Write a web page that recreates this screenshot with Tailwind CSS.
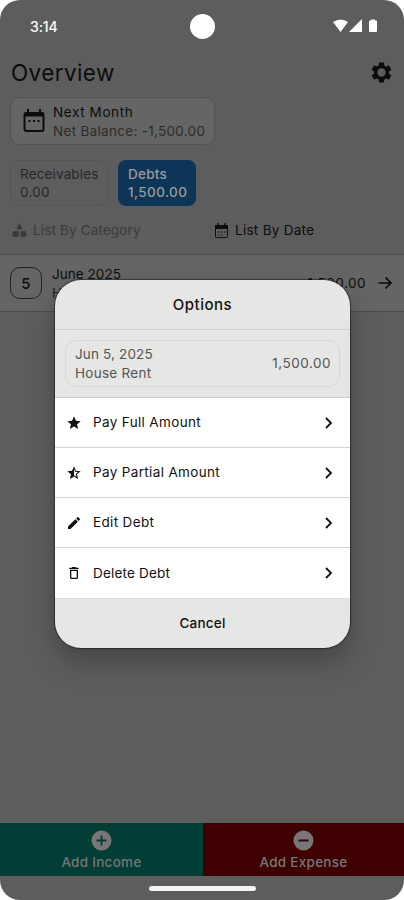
<!DOCTYPE html>
<html lang="en">
<head>
<meta charset="utf-8">
<title>Overview</title>
<script src="https://cdn.jsdelivr.net/npm/@tailwindcss/browser@4"></script>
</head>
<body class="bg-white">
<div class="relative w-[404px] h-[900px] overflow-hidden rounded-[20px] bg-[#5d5d5d] font-['Inter','Noto_Sans',sans-serif] text-[13.5px] tracking-[0.28px] leading-[19px] text-[#0c0c0c] whitespace-nowrap flex flex-col">
  <header class="relative h-[52px] shrink-0 flex items-center justify-between pl-[30px] pr-[26px] text-white">
    <span class="text-[14px] font-medium tracking-[-0.1px]">3:14</span>
    <div class="absolute left-[190px] top-[14px] size-[25px] rounded-full bg-white"></div>
    <svg class="w-[45px] h-[14px]" viewBox="0 0 45 14" fill="currentColor"><path d="M0 3Q7.500-2 15 3L7.500 13z"/><path d="M29 0v13H16z"/><path d="M37 1.500h1V.500h4v1h1q1 0 1 1V12q0 1-1 1h-6q-1 0-1-1V2.500q0-1 1-1z"/></svg>
  </header>
  <div class="h-[45px] shrink-0 flex items-center justify-between pl-[11px] pr-[11px] pb-[4px]">
    <h1 class="text-[22.5px] leading-[30px] tracking-[0.4px]">Overview</h1>
    <svg class="size-[25px] -mr-[1px] -mt-[1px]" viewBox="0 0 24 24" fill="currentColor"><path d="M19.140 12.940c.040-.300.060-.610.060-.940s-.020-.640-.070-.940l2.030-1.580a.490.490 0 0 0 .120-.610l-1.920-3.320a.488.488 0 0 0-.590-.220l-2.390.960a7 7 0 0 0-1.620-.940l-.360-2.540a.484.484 0 0 0-.480-.410h-3.840c-.240 0-.430.170-.470.410l-.360 2.540c-.590.240-1.130.570-1.620.940l-2.390-.960c-.220-.080-.470 0-.590.220L2.740 8.870c-.120.210-.080.470.120.610l2.030 1.580c-.050.300-.090.630-.090.940s.020.640.070.940l-2.030 1.580a.490.490 0 0 0-.120.610l1.920 3.320c.120.220.370.290.590.220l2.390-.960c.500.380 1.030.700 1.620.940l.360 2.540c.050.240.240.410.480.410h3.840c.240 0 .440-.170.470-.410l.360-2.540c.590-.240 1.130-.560 1.620-.940l2.390.960c.220.080.470 0 .590-.220l1.920-3.320c.120-.220.070-.470-.120-.610zM12 16a4 4 0 1 1 0-8 4 4 0 0 1 0 8z"/></svg>
  </div>
  <section class="ml-[10px] w-[205px] h-[48px] shrink-0 rounded-[10px] border border-[#535353] bg-[#656565] flex items-center pl-[12px]">
    <svg class="w-[22px] h-[24px]" viewBox="0 0 22 24" fill="none" stroke="currentColor" stroke-width="2"><rect x="1.500" y="4" width="19" height="18" rx="2"/><path d="M1 5.500h20" stroke-width="4"/><path d="M5 0v4M17 0v4"/><path d="M5.500 12h2M10 12h2M14.500 12h2"/></svg>
    <div class="ml-[8px] pt-[2px]"><p class="tracking-[0.6px]">Next Month</p><p class="text-[#2c2c2c] tracking-[0.3px]">Net Balance: -1,500.00</p></div>
  </section>
  <div class="mt-[15px] ml-[10px] flex gap-[10px] h-[46px] shrink-0 leading-[18px]">
    <div class="w-[98px] rounded-[10px] border border-[#555] pl-[9px] pt-[4px] text-[#272727]"><p class="tracking-[0.15px]">Receivables</p><p>0.00</p></div>
    <div class="w-[78px] rounded-[8px] bg-[#0c3557] pl-[10px] pt-[5px] text-[#9b9b9b] font-medium"><p>Debts</p><p class="tracking-[0.4px]">1,500.00</p></div>
  </div>
  <nav class="h-[48px] shrink-0 grid grid-cols-2 items-center pl-[12px]">
    <div class="flex items-center gap-[6px] text-[#3b3b3b]"><svg class="size-[15px]" viewBox="0 0 15 15" fill="currentColor"><path d="M7.500 1.500l2 4h-4z" stroke="currentColor" stroke-linejoin="round" stroke-width="1.500"/><rect x=".500" y="8" width="6.500" height="6" rx="2"/><rect x="8.200" y="8" width="6.300" height="6" rx="2.500"/></svg><span class="tracking-[0.15px]">List By Category</span></div>
    <div class="flex items-center gap-[6px] pl-[6px]"><svg class="size-[15px]" viewBox="0 0 15 15" fill="none" stroke="currentColor"><rect x="1.500" y="2.500" width="12" height="12" rx="1"/><path d="M1 4h13" stroke-width="4"/><path d="M4 0v3M11 0v3" stroke-width="1.500"/><path d="M4 9h1.500M7 9h1.500M10 9h1.500M4 12h1.500M7 12h1.500"/></svg><span>List By Date</span></div>
  </nav>
  <section class="h-[58px] shrink-0 border-y border-[#4d4d4d] bg-[#656565] flex items-center px-[10px]">
    <div class="size-[32px] rounded-[10px] border border-[#222] flex items-center justify-center font-medium text-[15px]">5</div>
    <div class="ml-[10px] pt-[2px]"><p class="tracking-[0.05px]">June 2025</p><p class="text-[#222]">House Rent</p></div>
    <span class="ml-auto mr-[12px] tracking-[0.5px]">1,500.00</span>
    <svg class="size-[14px] mr-[2px]" viewBox="0 0 14 14" fill="none" stroke="currentColor" stroke-width="1.700"><path d="M.5 7h12M7.500 1.500L13 7l-5.500 5.500"/></svg>
  </section>
  <footer class="mt-auto mb-[24px] h-[53px] shrink-0 grid grid-cols-[203px_201px] text-[#777] font-medium">
    <div class="bg-[#003e36] flex flex-col items-center pt-[7px]"><svg class="size-[21px]" viewBox="0 0 21 21"><circle cx="10.500" cy="10.500" r="10" fill="currentColor"/><path d="M5.500 10.500h10M10.500 5.500v10" stroke="#003e36" stroke-width="1.800"/></svg><span class="mt-[2px]">Add Income</span></div>
    <div class="bg-[#3e0000] flex flex-col items-center pt-[7px]"><svg class="size-[21px]" viewBox="0 0 21 21"><circle cx="10.500" cy="10.500" r="10" fill="currentColor"/><path d="M5.500 10.500h10" stroke="#3e0000" stroke-width="1.800"/></svg><span class="mt-[2px]">Add Expense</span></div>
  </footer>
  <div class="absolute left-[149px] top-[886px] w-[107px] h-[5px] rounded-full bg-[#f4f4f4]"></div>

  <div role="dialog" class="absolute left-[55px] top-[280px] w-[295px] h-[368px] rounded-[26px] overflow-hidden bg-[#e6e6e4] text-[#111] shadow-[0_0_1px_1px_rgba(0,0,0,0.45),0_14px_28px_rgba(0,0,0,0.25)] flex flex-col">
    <h2 class="h-[50px] shrink-0 border-b border-[#d0d0d0] flex items-center justify-center text-[15px] tracking-[0.5px] font-medium">Options</h2>
    <div class="h-[67px] shrink-0 px-[10px] pt-[10px]">
      <div class="h-[47px] rounded-[11px] border border-[#d8d8d8] flex items-center justify-between pl-[9px] pr-[8px] text-[#555]"><div><p class="tracking-[0.15px]">Jun 5, 2025</p><p>House Rent</p></div><span class="tracking-[0.5px]">1,500.00</span></div>
    </div>
    <div class="h-[201px] shrink-0 grid grid-rows-4 bg-white border-t border-[#ccc] divide-y divide-[#d4d4d4]">
      <div class="flex items-center pl-[11px] pr-[16px]"><svg class="size-[16px] mr-[11px]" viewBox="0 0 24 24" fill="currentColor"><path d="M12 17.270L18.180 21l-1.640-7.030L22 9.240l-7.190-.61L12 2 9.190 8.630 2 9.240l5.460 4.730L5.820 21z"/></svg><span class="tracking-[0.35px]">Pay Full Amount</span><svg class="ml-auto w-[10px] h-[12px]" viewBox="0 0 10 12" fill="none" stroke="currentColor" stroke-width="1.800"><path d="M2 1l5 5-5 5"/></svg></div>
      <div class="flex items-center pl-[11px] pr-[16px]"><svg class="size-[16px] mr-[11px]" viewBox="0 0 24 24" fill="currentColor"><path d="M22 9.240l-7.190-.62L12 2 9.190 8.630 2 9.240l5.460 4.730L5.820 21 12 17.270 18.180 21l-1.630-7.030zM12 15.400V6.100l1.710 4.040 4.380.38-3.320 2.880 1 4.280z"/></svg><span class="tracking-[0.35px]">Pay Partial Amount</span><svg class="ml-auto w-[10px] h-[12px]" viewBox="0 0 10 12" fill="none" stroke="currentColor" stroke-width="1.800"><path d="M2 1l5 5-5 5"/></svg></div>
      <div class="flex items-center pl-[11px] pr-[16px]"><svg class="size-[16px] mr-[11px]" viewBox="0 0 24 24" fill="currentColor"><path d="M3 17.250V21h3.750L17.810 9.940l-3.750-3.750zM20.710 7.040a1 1 0 0 0 0-1.410l-2.340-2.340a1 1 0 0 0-1.410 0l-1.830 1.830 3.750 3.750z"/></svg><span class="tracking-[0.35px]">Edit Debt</span><svg class="ml-auto w-[10px] h-[12px]" viewBox="0 0 10 12" fill="none" stroke="currentColor" stroke-width="1.800"><path d="M2 1l5 5-5 5"/></svg></div>
      <div class="flex items-center pl-[11px] pr-[16px]"><svg class="size-[16px] mr-[11px]" viewBox="0 0 24 24" fill="currentColor"><path d="M6 19c0 1.100.9 2 2 2h8c1.100 0 2-.9 2-2V7H6zM8 9h8v10H8zM15.500 4l-1-1h-5l-1 1H5v2h14V4z"/></svg><span class="tracking-[0.2px]">Delete Debt</span><svg class="ml-auto w-[10px] h-[12px]" viewBox="0 0 10 12" fill="none" stroke="currentColor" stroke-width="1.800"><path d="M2 1l5 5-5 5"/></svg></div>
    </div>
    <button class="h-[50px] shrink-0 border-t border-[#dcdcdc] font-medium tracking-[0.2px]">Cancel</button>
  </div>
</div>
</body>
</html>
